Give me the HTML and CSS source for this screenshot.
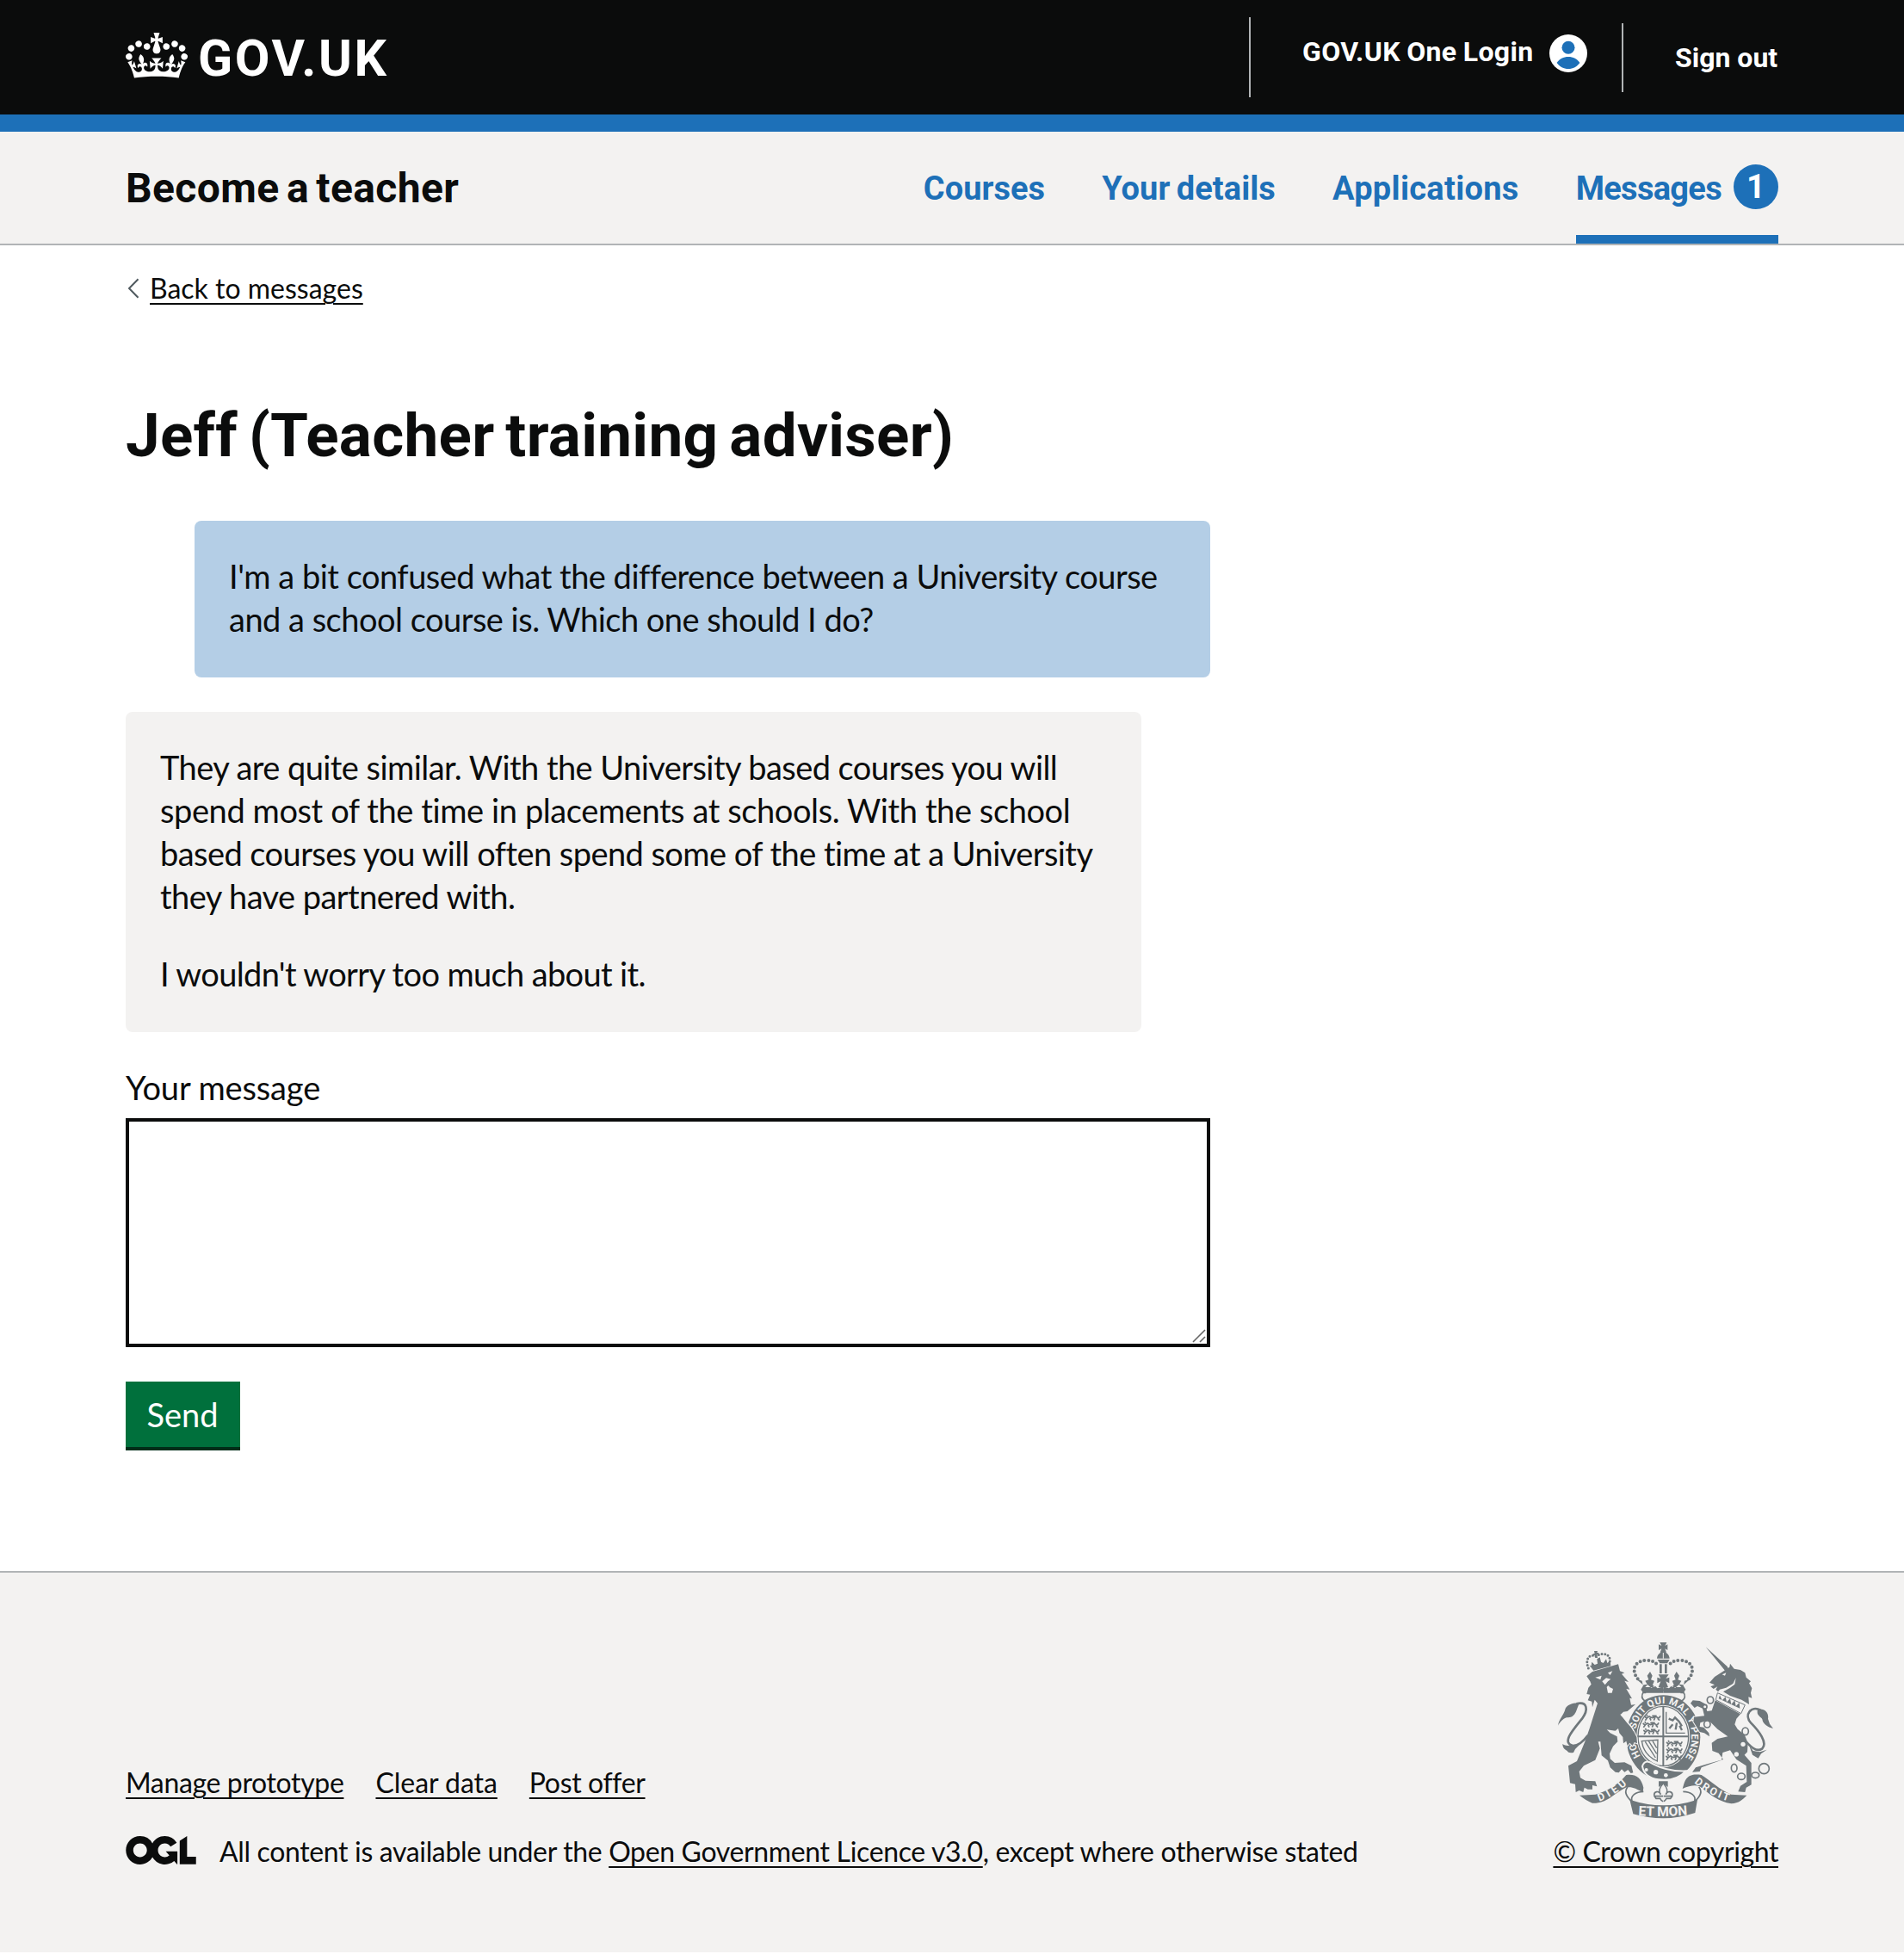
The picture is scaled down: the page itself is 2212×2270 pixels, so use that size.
FILE: index.html
```html
<!DOCTYPE html>
<html lang="en">
<head>
<meta charset="utf-8">
<title>Jeff (Teacher training adviser) - Become a teacher - GOV.UK</title>
<link rel="stylesheet" href="styles.css">
</head>
<body>
<header class="header">
  <div class="container header-inner">
    <a class="logo" href="#">
      <svg class="logo-crown" viewBox="0 0 132 97" aria-hidden="true"><path fill="currentColor" fill-rule="evenodd" d="M25 30.2c3.5 1.5 7.7-.2 9.1-3.7 1.5-3.6-.2-7.8-3.9-9.2-3.6-1.4-7.6.3-9.1 3.9-1.4 3.5.3 7.5 3.9 9zM9 39.5c3.6 1.5 7.8-.2 9.2-3.7 1.5-3.6-.2-7.8-3.9-9.1-3.6-1.5-7.6.2-9.1 3.8-1.4 3.5.3 7.5 3.8 9zM4.4 57.2c3.5 1.5 7.7-.2 9.1-3.8 1.5-3.6-.2-7.7-3.9-9.1-3.5-1.5-7.6.3-9.1 3.8-1.4 3.5.3 7.6 3.9 9.1zm38.3-21.4c3.5 1.5 7.7-.2 9.1-3.8 1.5-3.6-.2-7.7-3.9-9.1-3.6-1.5-7.6.3-9.1 3.8-1.3 3.6.4 7.7 3.9 9.1zm64.4-5.6c-3.6 1.5-7.8-.2-9.1-3.7-1.5-3.6.2-7.8 3.8-9.2 3.6-1.4 7.7.3 9.2 3.9 1.3 3.5-.4 7.5-3.9 9zm15.9 9.3c-3.6 1.5-7.7-.2-9.1-3.7-1.5-3.6.2-7.8 3.7-9.1 3.6-1.5 7.7.2 9.2 3.8 1.5 3.5-.3 7.5-3.8 9zm4.7 17.7c-3.6 1.5-7.8-.2-9.2-3.8-1.5-3.6.2-7.7 3.9-9.1 3.6-1.5 7.7.3 9.2 3.8 1.3 3.5-.4 7.6-3.9 9.1zM89.3 35.8c-3.6 1.5-7.8-.2-9.2-3.8-1.4-3.6.2-7.7 3.9-9.1 3.6-1.5 7.7.3 9.2 3.8 1.4 3.6-.3 7.7-3.9 9.1zM69.7 17.7l8.9 4.7V9.3l-8.9 2.8c-.2-.3-.5-.6-.9-.9L72.4 0H59.6l3.5 11.2c-.3.3-.6.5-.9.9l-8.8-2.8v13.1l8.8-4.7c.3.3.6.7.9.9l-5 15.4v.1c-.2.8-.4 1.6-.4 2.4 0 4.1 3.1 7.5 7 8.1h.2c.3 0 .7.1 1 .1.4 0 .7 0 1-.1h.2c4-.6 7.1-4.1 7.1-8.1 0-.8-.1-1.7-.4-2.4V34l-5.1-15.4c.4-.2.7-.6 1-.9zM66 92.8c16.9 0 32.8 1.1 47.1 3.2 4-16.9 8.9-26.7 14-33.5l-9.6-3.4c1 4.9 1.1 7.2 0 10.2-1.5-1.4-3-4.3-4.2-8.7L108.6 76c2.8-2 5-3.2 7.5-3.3-4.4 9.4-10 11.9-13.6 11.2-4.3-.8-6.3-4.6-5.6-7.9 1-4.7 5.7-5.9 8-.5 4.3-8.7-3-11.4-7.6-8.8 7.1-7.2 7.9-13.5 2.1-21.1-8 6.1-8.1 12.3-4.5 20.8-4.7-5.4-12.1-2.5-9.5 6.2 3.4-5.2 7.9-2 7.2 3.1-.6 4.3-6.4 7.8-13.5 7.2-10.3-.9-10.9-8-11.2-13.8 2.5-.5 7.1 1.8 11 7.3L80.2 60c-4.1 4.4-8 5.3-12.3 5.4 1.4-4.4 8-11.6 8-11.6H55.5s6.4 7.2 7.9 11.6c-4.2-.1-8-1-12.3-5.4l1.4 16.4c3.9-5.5 8.5-7.7 10.9-7.3-.3 5.8-.9 12.8-11.1 13.8-7.2.6-12.9-2.9-13.5-7.2-.7-5 3.8-8.3 7.1-3.1 2.7-8.7-4.6-11.6-9.4-6.2 3.7-8.5 3.6-14.7-4.6-20.8-5.8 7.6-5 13.9 2.2 21.1-4.7-2.6-11.9.1-7.7 8.8 2.3-5.5 7.1-4.2 8.1.5.7 3.3-1.3 7.1-5.7 7.9-3.5.7-9-1.8-13.5-11.2 2.5.1 4.7 1.3 7.5 3.3l-4.7-15.4c-1.2 4.4-2.7 7.2-4.3 8.7-1.1-3-.9-5.3 0-10.2l-9.5 3.4c5 6.9 9.9 16.7 14 33.5 14.8-2.1 30.8-3.2 47.7-3.2z"/></svg>
      <span class="logo-text">GOV.UK</span>
    </a>
    <nav class="account">
      <a class="account-login" href="#">
        <span>GOV.UK One Login</span>
        <svg class="account-icon" viewBox="0 0 44 44" aria-hidden="true"><circle cx="22" cy="22" r="22" fill="#fff"/><circle cx="22" cy="15.3" r="7.5" fill="#1d70b8"/><path fill="#1d70b8" d="M8.600 33C11.500 28.400 16.500 25.900 22 25.900s10.500 2.500 13.400 7.100C32 37.600 27.500 40 22 40S12 37.600 8.600 33z"/></svg>
      </a>
      <a class="account-signout" href="#">Sign out</a>
    </nav>
  </div>
</header>

<div class="service">
  <div class="container service-inner">
    <a class="service-name" href="#">Become a teacher</a>
    <nav class="service-nav">
      <a class="nav-link" href="#">Courses</a>
      <a class="nav-link" href="#">Your details</a>
      <a class="nav-link nav-link-wide" href="#">Applications</a>
      <a class="nav-link nav-link-current" href="#"><span class="nav-label">Messages</span><span class="badge">1</span></a>
    </nav>
  </div>
</div>

<main class="container main">
  <a class="back" href="#">
    <svg class="back-arrow" viewBox="0 0 14 24" aria-hidden="true"><path d="M12.500 1.200 2 12l10.500 10.800" fill="none" stroke="#505a5f" stroke-width="2"/></svg>
    <span class="back-text">Back to messages</span>
  </a>
  <h1 class="title">Jeff (Teacher training adviser)</h1>
  <div class="thread">
    <div class="message message-sent">
      <p class="message-text">I'm a bit confused what the difference between a University course<br>and a school course is. Which one should I do?</p>
    </div>
    <div class="message message-received">
      <p class="message-text">They are quite similar. With the University based courses you will<br><span class="looser">spend most of the time in placements at schools. With the school</span><br>based courses you will often spend some of the time at a University<br>they have partnered with.</p>
      <p class="message-text message-text-tight">I wouldn't worry too much about it.</p>
    </div>
    <label class="label" for="message">Your message</label>
    <div class="field">
      <textarea class="textarea" id="message"></textarea>
      <svg class="grip" viewBox="0 0 16 16" aria-hidden="true"><path d="M1 15 15 1M9 15l6-6" fill="none" stroke="#666" stroke-width="1.600"/></svg>
    </div>
    <button class="button" type="button">Send</button>
  </div>
</main>

<footer class="footer">
  <div class="container footer-inner">
    <div class="footer-meta">
      <div class="footer-links">
        <a class="link" href="#">Manage prototype</a>
        <a class="link link-clear" href="#">Clear data</a>
        <a class="link" href="#">Post offer</a>
      </div>
      <div class="licence">
        <svg class="ogl" viewBox="0 0 483.2 195.7" aria-hidden="true"><path fill="currentColor" d="M421.5 142.8V.1l-50.7 32.3v161.1h112.4v-50.7zm-122.3-9.6A47.12 47.12 0 0 1 221 97.8c0-26 21.1-47.1 47.1-47.1 16.7 0 31.4 8.7 39.7 21.8l42.7-27.2A97.63 97.63 0 0 0 268.1 0c-36.5 0-68.3 20.1-85.1 49.7A98 98 0 0 0 97.8 0C43.9 0 0 43.9 0 97.8s43.9 97.8 97.8 97.8c36.5 0 68.3-20.1 85.1-49.7a97.76 97.76 0 0 0 149.6 25.4l19.4 22.2h3v-87.8h-80l24.3 27.5zM97.8 145c-26 0-47.1-21.1-47.1-47.1s21.1-47.1 47.1-47.1 47.1 21.1 47.1 47.1S123.8 145 97.8 145"/></svg>
        <span class="licence-text">All content is available under the <a class="link" href="#">Open Government Licence v3.0</a>, except where otherwise stated</span>
      </div>
    </div>
    <div class="copyright">
      <svg class="arms" viewBox="90 80 750 615" aria-hidden="true">
        <defs>
          <path id="garter" d="M380 480A99 115 0 1 1 528 489"/>
          <path id="dieu" d="M234 634Q286 616 338 568"/>
          <path id="mon" d="M370 683Q457 689 546 681"/>
          <path id="droit" d="M564 569Q616 614 690 635"/>
          <path id="passant" fill="none" stroke="#6f777b" stroke-width="5" d="M0 4l7 6 9-6 10 5 14-4 10 6M8 10l-6 8M18 9l4 9M36 9l-4 9M44 10l8 8M50 10l5-8M10 3l-4-5M26 2h16"/>
          <g id="curl" fill="none" stroke="#6f777b" stroke-width="5"><path d="M333 584c-14 16-4 34 14 50M388 600c-28 0-46 16-40 32M456 572c-14 16-16 26-8 38M448 610c-6-16-26-10-22 6l6 8h14c2 4 4 8 10 10M428 616h28"/></g>
          <g id="arch"><path d="M368 207C346 180 352 144 400 142c26 2 34 10 38 22" fill="none" stroke="#6f777b" stroke-width="12" stroke-linecap="round" stroke-dasharray="0 14.500"/><path fill="#6f777b" d="M457 256V234l-20 6-8-8-14 6-14-12-12 2-10 16 8 12zM361 206l22 8 4 20-2 24h12l-4-24zM411 182l8 14-5 14 12 4-6 14 8 8h-34l8-8-8-14 12-4-5-14z"/></g>
        </defs>
        <g fill="#6f777b">
          <ellipse cx="457" cy="411" rx="129" ry="149"/>
          <ellipse cx="457" cy="407" rx="93" ry="109" fill="#f3f2f1"/>
        </g>
        <ellipse cx="457" cy="407" rx="88" ry="104" fill="none" stroke="#6f777b" stroke-width="4"/>
        <g class="arms-motto"><text font-size="34"><textPath href="#garter" textLength="486" startOffset="4">HONI SOIT QUI MAL Y PENSE</textPath></text></g>
        <path d="M457 305v206M367 408h178" stroke="#6f777b" stroke-width="6"/>
        <use href="#passant" x="392" y="334"/>
        <use href="#passant" x="386" y="358"/>
        <use href="#passant" x="388" y="382"/>
        <use href="#passant" x="468" y="424"/>
        <use href="#passant" x="468" y="448"/>
        <use href="#passant" x="466" y="472"/>
        <g fill="none" stroke="#6f777b">
          <path d="M467 322v74h66" stroke-width="4"/>
          <path d="M476 346l14 6 8-10 14 14 10 16M490 366l-12 14M504 360l-4 24M514 370l8 16" stroke-width="7"/>
          <path d="M382 424l56-4-2 74q-48-22-54-70zM394 426l36 56M406 424l28 44M420 424l14 24" stroke-width="4"/>
        </g>
        <path d="M384 512Q392 484 422 504 470 530 536 528 500 566 440 558 392 552 384 512z" fill="#6f777b" stroke="#f3f2f1" stroke-width="6"/>
        <g fill="#f3f2f1"><circle cx="398" cy="524" r="6"/><circle cx="431" cy="532" r="8"/><circle cx="466" cy="543" r="7"/></g>

        <!-- crown above the shield -->
        <path d="M388 252Q457 240 526 252 540 272 522 284L510 278Q457 254 404 278L392 284Q376 272 388 252z" fill="#f3f2f1" stroke="#6f777b" stroke-width="5"/>
        <use href="#arch"/>
        <use href="#arch" transform="translate(914 0) scale(-1 1)"/>
        <path fill="#6f777b" d="M445 80h24l-6 12 9-5v20l-9-5 5 13h-22l5-13-10 5V87l10 5zM435 136c2-30 42-30 44 0zM437 140h42l-8 13h-26zM444 156h8v32h-8zM462 156h8v32h-8zM440 192h36l-10 14 12-4v20l-12-6 8 20h-34l8-20-12 6v-20l12 4z"/>
        <path d="M457 116v20" stroke="#f3f2f1" stroke-width="3"/>

        <g transform="translate(60 30)">
          <!-- lion -->
          <path fill="#6f777b" stroke="#f3f2f1" stroke-width="6" paint-order="stroke" d="M130 168 150 152 240 126 246 150 262 156 252 160 276 188 262 184 280 214 268 212 288 246 280 244 285 268 300 266 272 290 258 292 248 302 270 330 290 352 304 380 306 402 296 398 290 410 280 400 272 410 268 394 258 402 256 380 244 366 240 350 230 358 200 354 212 366 236 378 238 396 222 412 210 438 212 456 228 470 262 468 286 480 292 504 284 506 274 494 262 502 252 492 242 504 230 502 212 486 204 462 182 444 178 396 170 396 176 420 160 460 120 480 104 500 108 522 126 532 160 534 166 552 150 548 150 562 134 562 122 556 118 572 104 566 92 572 90 544 72 540 66 480 96 464 110 430 124 396 140 350 156 300 168 262 158 250 150 276 148 256 134 252 142 232 130 230 136 208 146 196 142 186z"/>
          <path fill="#f3f2f1" d="M200 206q6-10 10 0l12 6-4 14h-14zM160 172l22-6-4 14zM204 156l16-6-8 14zM184 186l14-12 16 4-10 8-10 12z"/>
          <path d="M248 302q30 24 46 58" fill="none" stroke="#f3f2f1" stroke-width="3"/>
          <path d="M136 140C122 104 144 90 162 98 190 82 216 92 210 120" fill="none" stroke="#6f777b" stroke-width="9" stroke-linecap="round" stroke-dasharray="0 11"/>
          <path fill="#6f777b" d="M140 130l14 18 60-16-2-18-10 8-4-14-10 14-8-4-4-16-10 6 2 16-10 4-10-10-2 14zM156 80h12l-2 6h6v8l-6-2 2 12h-8l-2-10-6 4v-8l6-2z"/>
          <path fill="#6f777b" d="M30 340C34 314 50 306 56 280 66 264 86 260 104 262 92 290 92 312 60 312 44 318 36 330 30 340zM46 404c14 10 26 4 44 4l20-6-20 20-6 12c-14 2-18 0-22-6-12-6-16-14-16-24z"/>
          <path d="M94 264c40-10 42 22 20 52-34 42-72 84-32 94 20 0 36-14 52-36" fill="none" stroke="#6f777b" stroke-width="8"/>
        </g>

        <g transform="translate(450 30)">
          <!-- unicorn -->
          <path fill="#6f777b" stroke="#f3f2f1" stroke-width="6" paint-order="stroke" d="M188 252 276 300 262 316 256 336 266 352 290 372 302 400 300 432 290 442 314 470 314 546 296 556 292 572 268 570 276 550 298 536 296 480 262 458 240 426 214 434 210 460 176 472 140 486 134 500 108 502 120 486 160 474 216 458 200 436 178 428 176 400 196 386 232 378 196 352 172 328 160 322 136 330 134 344 148 346 166 366 168 378 150 366 134 362 112 326 114 310 150 306 144 280 126 272 116 278 102 262 110 252 134 254 152 264 160 290 176 288z"/>
          <path fill="#6f777b" d="M155 66 230 134 238 150 222 148zM168 190 186 170 214 152 238 136 240 124 254 142 276 146 292 156 296 172 312 186 306 192 316 210 312 226 316 244 304 240 306 266 290 256 280 250 240 236 216 222 240 208 256 196 260 174 250 194 226 208 204 214 198 222 190 214 196 204 182 212 172 204 186 198z"/>
          <path fill="#f3f2f1" d="M212 162l14-6-4 10z"/>
          <path d="M196 226 292 268 278 298 190 250z" fill="#f3f2f1" stroke="#6f777b" stroke-width="3"/>
          <path d="M200 246l4-12 8 18 12-12 4 18 12-12 4 20 12-14 4 20 12-12 2 20z" fill="#6f777b"/>
          <path fill="#6f777b" d="M336 284C360 278 376 296 372 316L378 334 390 350C370 346 354 334 352 318 348 308 330 306 336 284zM306 408l14 20 24 4 24-8-20 14-10 16-20-12z"/>
          <path d="M346 286C312 268 288 304 312 330 340 358 372 400 352 420 336 432 318 422 298 398" fill="none" stroke="#6f777b" stroke-width="8"/>
          <g fill="#f3f2f1" stroke="#6f777b" stroke-width="5"><circle cx="358" cy="490" r="18"/><ellipse cx="328" cy="513" rx="13" ry="10"/><ellipse cx="279" cy="517" rx="13" ry="11"/><ellipse cx="254" cy="488" rx="10" ry="14"/><ellipse cx="293" cy="360" rx="11" ry="13"/><ellipse cx="171" cy="251" rx="11" ry="12"/><circle cx="152" cy="274" r="7"/><ellipse cx="160" cy="335" rx="11" ry="12"/></g>
          <g fill="#f3f2f1"><circle cx="285" cy="405" r="8"/><circle cx="262" cy="440" r="8"/></g>
        </g>

        <!-- ribbon -->
        <g fill="#6f777b">
          <path d="M165 613 220 610C260 600 300 575 328 542 360 538 380 550 388 586L386 602C360 590 350 582 326 586 280 610 260 642 210 640 195 634 180 624 165 613zM748 613 694 610C650 592 620 560 590 542 560 538 540 542 530 570L524 590C550 578 570 576 584 582 620 610 650 636 694 642 720 640 734 628 748 613zM340 628Q400 648 457 648T576 628L568 674Q510 693 457 693T352 678z"/>
          <path d="M441 564h32v20l-16-12-16 12z"/>
        </g>
        <use href="#curl"/>
        <use href="#curl" transform="translate(914 0) scale(-1 1)"/>
        <g class="arms-motto">
          <text font-size="37"><textPath href="#dieu" textLength="114">DIEU</textPath></text>
          <text font-size="47"><textPath href="#mon" textLength="172">ET MON</textPath></text>
          <text font-size="37"><textPath href="#droit" textLength="136">DROIT</textPath></text>
        </g>
      </svg>
      <a class="link" href="#">© Crown copyright</a>
    </div>
  </div>
</footer>
</body>
</html>
```
FILE: styles.css
```css
* { box-sizing: border-box; }

body {
  margin: 0;
  background: #fff;
  color: #0b0c0c;
  font-family: Lato, "Liberation Sans", sans-serif;
  font-size: 38px;
  line-height: 50px;
}

a { color: inherit; text-decoration: none; }

.container { width: 1920px; margin: 0 auto; }

/* Header */
.header {
  background: #0b0c0c;
  color: #fff;
  border-bottom: 20px solid #1d70b8;
  font-family: Roboto, "Liberation Sans", sans-serif;
  font-weight: 700;
}
.header-inner { display: flex; justify-content: space-between; height: 133px; }
.logo { display: flex; gap: 12px; padding-top: 38px; }
.logo-crown { width: 72px; height: 53px; }
.logo-text { font-size: 59px; line-height: 60px; letter-spacing: 2.6px; }
.account { display: flex; font-size: 32px; line-height: 40px; white-space: nowrap; }
.account-login {
  display: flex;
  justify-content: space-between;
  width: 433px;
  height: 93px;
  margin-top: 20px;
  padding: 20px 40px 0 60px;
  border-left: 2px solid #b1b4b6;
  letter-spacing: 0.35px;
  word-spacing: -1px;
}
.account-icon { width: 44px; height: 44px; }
.account-signout {
  width: 182px;
  height: 80px;
  margin-top: 27px;
  padding: 20px 0 0 60px;
  border-left: 2px solid #b1b4b6;
}

/* Service navigation */
.service {
  background: #f3f2f1;
  border-bottom: 2px solid #b1b4b6;
  font-family: Roboto, "Liberation Sans", sans-serif;
  font-weight: 700;
}
.service-inner { display: flex; justify-content: space-between; height: 130px; }
.service-name { padding: 41px 0 0; font-size: 48px; letter-spacing: 0.4px; word-spacing: -4px; }
.service-nav { display: flex; gap: 66px; color: #1d70b8; }
.nav-link { padding-top: 41px; letter-spacing: 0.05px; word-spacing: -2px; }
.nav-link-wide { letter-spacing: 0.3px; }
.nav-link-current { display: flex; gap: 14px; padding-top: 38px; border-bottom: 10px solid #1d70b8; }
.nav-label { padding-top: 3px; letter-spacing: -0.7px; }
.badge {
  width: 52px;
  height: 52px;
  padding-top: 1px;
  border-radius: 50%;
  background: #1d70b8;
  color: #fff;
  text-align: center;
  letter-spacing: 0;
}

/* Conversation */
.main { display: flex; flex-direction: column; align-items: flex-start; height: 1540px; padding-top: 29px; }
.back { display: flex; font-size: 32px; line-height: 40px; }
.back-arrow { width: 14px; height: 24px; margin: 9px 12px 0 2px; }
.back-text { padding-top: 1px; text-decoration: underline; text-decoration-thickness: 2px; text-underline-offset: 5px; }
.title {
  margin: 113px 0 62px;
  font: 700 71px/75px Roboto, "Liberation Sans", sans-serif;
  letter-spacing: 0.3px;
  word-spacing: -5px;
}
.thread { display: flex; flex-direction: column; width: 1260px; letter-spacing: -0.56px; }
.message { margin-bottom: 40px; padding: 39px 38px 43px 40px; border-radius: 8px; white-space: nowrap; }
.message-sent { margin-left: 80px; background: #b4cee6; letter-spacing: -0.51px; }
.message-received { margin-right: 80px; background: #f3f2f1; }
.message-text { margin: 0; }
.message-text + .message-text { margin-top: 40px; }
.message-text-tight { letter-spacing: -0.64px; }
.looser { letter-spacing: -0.41px; }
.label { margin: -1px 0 11px; letter-spacing: -0.13px; }
.field { display: flex; position: relative; }
.textarea {
  width: 1260px;
  height: 266px;
  padding: 10px;
  border: 4px solid #0b0c0c;
  border-radius: 0;
  background: #fff;
  resize: none;
}
.grip { position: absolute; right: 5px; bottom: 5px; width: 16px; height: 16px; }
.button {
  align-self: flex-start;
  width: 133px;
  height: 76px;
  margin-top: 40px;
  padding: 0 1px 1px 0;
  border: 0;
  box-shadow: 0 4px 0 #002d18;
  background: #00703c;
  color: #fff;
  font: inherit;
  letter-spacing: 0;
}

/* Footer */
.footer { border-top: 2px solid #b1b4b6; background: #f3f2f1; font-size: 32px; line-height: 40px; }
.footer-inner { display: flex; justify-content: space-between; align-items: flex-end; height: 441px; padding-bottom: 97px; }
.footer-meta { letter-spacing: -0.36px; }
.footer-links { display: flex; gap: 37px; margin-bottom: 40px; }
.licence { display: flex; gap: 27px; }
.ogl { width: 82px; height: 33px; margin-top: 2px; }
.licence-text { letter-spacing: -0.35px; }
.link { text-decoration: underline; text-decoration-thickness: 2px; text-underline-offset: 5px; }
.link-clear { letter-spacing: -0.05px; }
.copyright { display: flex; flex-direction: column; align-items: flex-end; letter-spacing: -0.4px; }
.arms { width: 250px; height: 205px; margin: 0 6px 18px 0; }
.arms-motto { fill: #f3f2f1; font-family: Roboto, "Liberation Sans", sans-serif; font-weight: 700; letter-spacing: 0; }
```
